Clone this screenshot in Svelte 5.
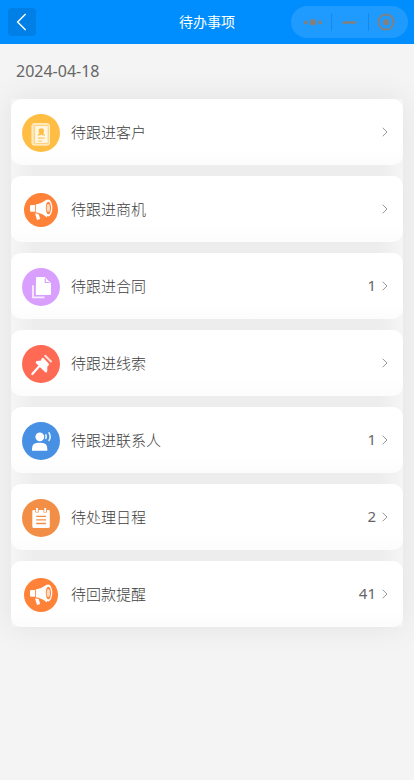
<script lang="ts">
  type Item = { icon: string; color: string; label: string; count?: number };

  const items: Item[] = [
    { icon: 'customer', color: '#ffbe43', label: '待跟进客户' },
    { icon: 'horn', color: '#ff8238', label: '待跟进商机' },
    { icon: 'contract', color: '#d99fff', label: '待跟进合同', count: 1 },
    { icon: 'pin', color: '#ff6a55', label: '待跟进线索' },
    { icon: 'contact', color: '#4790e4', label: '待跟进联系人', count: 1 },
    { icon: 'schedule', color: '#f38e47', label: '待处理日程', count: 2 },
    { icon: 'horn', color: '#ff8238', label: '待回款提醒', count: 41 },
  ];
</script>

<div class="page">
  <header>
    <button class="back" aria-label="返回">
      <svg width="28" height="28" viewBox="0 0 28 28">
        <path d="M17.6 6 9.6 14l8 8" fill="none" stroke="#fff" stroke-width="1.4" />
      </svg>
    </button>
    <h1>待办事项</h1>
    <div class="capsule">
      <svg width="40" height="32" viewBox="0 0 40 32">
        <g fill="#808080">
          <circle cx="14.8" cy="16.4" r="2" />
          <circle cx="22" cy="16.2" r="3.2" />
          <circle cx="29.2" cy="16.4" r="2" />
        </g>
      </svg>
      <svg class="split" width="37" height="32" viewBox="0 0 37 32">
        <path d="M12.5 16.5h11.8" stroke="#808080" stroke-width="2.4" stroke-linecap="round" />
      </svg>
      <svg class="split" width="40" height="32" viewBox="0 0 40 32">
        <circle cx="18" cy="16" r="7.6" fill="none" stroke="#808080" stroke-width="2" />
        <circle cx="18.2" cy="16.2" r="3.1" fill="#808080" />
      </svg>
    </div>
  </header>

  <div class="date">2024-04-18</div>

  <ul>
    {#each items as item}
      <li>
        <svg class="icon" width="38" height="38" viewBox="0 0 38 38">
          <circle cx="19" cy="19" r={item.icon === 'horn' ? 17 : 19} fill={item.color} />
          {#if item.icon === 'customer'}
            <rect x="10" y="9.7" width="17.4" height="21.4" rx="2" fill="#ffe3a8" stroke="#fff3d9" />
            <rect x="12.6" y="11.6" width="13.6" height="17.8" rx=".8" fill="#fff6e4" stroke="#ffcb66" stroke-width=".8" />
            <circle cx="19.3" cy="17" r="2.7" fill="#ffbe43" />
            <path d="M15.6 21.7q.6-2.3 2.8-2.7h2q2 .4 2.7 2.7l-2.6-.4-1.2-.8-1.3.8z" fill="#ffbe43" />
            <path d="M16 24.2h6.5M16 27h4" stroke="#ffc85f" stroke-width="1.2" />
          {:else if item.icon === 'horn'}
            <path d="M8 15.3q0-1.2 1.2-1.2h3.8v6.7H9.2Q8 20.8 8 19.6z" fill="#fff" />
            <path d="M13.8 13.6q6-1.2 11.2-5.1v18q-5-4.2-11.2-5.2z" fill="#fff" />
            <ellipse cx="26.2" cy="17" rx="4.1" ry="8.4" fill="#fff" />
            <ellipse cx="26.4" cy="17" rx="2.6" ry="6.3" fill="#ff8238" />
            <ellipse cx="26.3" cy="17" rx="1.7" ry="4" fill="#ffd8c0" />
            <path d="m13 22.2 3.7.8 1.5 5-3.2 1z" fill="#fff" />
          {:else if item.icon === 'contract'}
            <path d="M11 17.2v12.2h11.4" fill="none" stroke="#f8edff" stroke-width="1.8" />
            <path d="M14 10q0-1 1-1h7.8l6.2 6.2v10.9q0 1-1 1H14.8q-1 0-1-1z" fill="#fff" />
            <path d="M23.3 10.5v4h4" fill="none" stroke="#d99fff" stroke-width="1.2" />
          {:else if item.icon === 'pin'}
            <path d="m10.3 29 6.7-7.4" stroke="#fff" stroke-width="2.2" stroke-linecap="round" />
            <path
              d="m20.8 14.2 4.9 5.2-1.6 1.7-.2 5.1-8.9-8.9 4.6-.6z"
              fill="#fff"
              stroke="#fff"
              stroke-width="2.6"
              stroke-linejoin="round"
            />
            <path d="m23.2 10.7 5.8 5.8" stroke="#ffe3df" stroke-width="2" stroke-linecap="round" />
          {:else if item.icon === 'contact'}
            <circle cx="17.8" cy="14.8" r="4.4" fill="#fff" />
            <path d="M10 28.8v-2.1q0-6 6-6h3.3q6 0 6 6v2.1z" fill="#fff" />
            <path d="M23.4 12.2q1.8 2.4 0 4.8M26.7 10.2q2.9 4.4 0 8.8" fill="none" stroke="#e2effc" stroke-width="1.6" />
          {:else}
            <rect x="10.3" y="11" width="17.5" height="18" rx="1.4" fill="#fff" />
            <path d="M15 9v4.6M23.2 9v4.6" stroke="#f38e47" stroke-width="3.4" />
            <path d="M15 9v4M23.2 9v4" stroke="#fff" stroke-width="1.8" />
            <path d="M14.2 17.4h9.8M14.2 20.9h9.8M14.2 24.5h9.8" stroke="#f38e47" stroke-width="1.3" />
          {/if}
        </svg>
        <span class="label">{item.label}</span>
        <span class="count">{item.count ?? ''}</span>
        <svg class="arrow" width="6" height="10" viewBox="0 0 6 10">
          <path d="M.7.8 5 5 .7 9.2" fill="none" stroke="#8a8a8a" stroke-width=".9" />
        </svg>
      </li>
    {/each}
  </ul>
</div>

<style>
  :global(body) {
    background: #f4f4f4;
  }

  .page {
    min-height: 780px;
    overflow: hidden;
    color: #666;
    font-family: 'Noto Sans', 'Noto Sans CJK SC', sans-serif;
    font-size: 15px;
  }

  header {
    display: grid;
    grid-template-columns: 1fr auto 1fr;
    align-items: center;
    height: 44px;
    padding: 0 6px 0 8px;
    background: #008eff;
  }

  .back {
    width: 28px;
    height: 28px;
    padding: 0;
    border: 0;
    border-radius: 4px;
    background: #0080e6;
  }

  .back svg {
    display: block;
  }

  h1 {
    margin: 0 2px 0 0;
    color: #fff;
    font-size: 14px;
    font-weight: 400;
    line-height: 20px;
  }

  .capsule {
    display: flex;
    align-items: center;
    justify-self: end;
    width: 117px;
    height: 32px;
    border-radius: 16px;
    background: #1f9bff;
  }

  .split {
    background: linear-gradient(#178ae8, #178ae8) 0 50% / 1px 18px no-repeat;
  }

  .date {
    height: 55px;
    padding-left: 16px;
    font-size: 16px;
    line-height: 55px;
  }

  ul {
    display: flex;
    flex-direction: column;
    gap: 11px;
    margin: 0 11px;
    padding: 0;
    background: linear-gradient(90deg, #f5f5f5, #ededed 24px, #ededed calc(100% - 24px), #f5f5f5);
    box-shadow: 0 0 30px rgba(0, 0, 0, 0.08);
    list-style: none;
  }

  li {
    display: flex;
    align-items: center;
    height: 66px;
    box-sizing: border-box;
    padding: 1px 15px 0 11px;
    border-radius: 10px;
    background: linear-gradient(#fff 75%, #fcfcfc);
  }

  .icon {
    flex: none;
  }

  .label {
    flex: 1;
    margin-left: 11px;
    padding-bottom: 2px;
    color: #404040;
    font-weight: 300;
  }

  .count {
    margin-right: 6px;
    padding-bottom: 3px;
  }

  .arrow {
    margin-bottom: 2px;
  }
</style>
